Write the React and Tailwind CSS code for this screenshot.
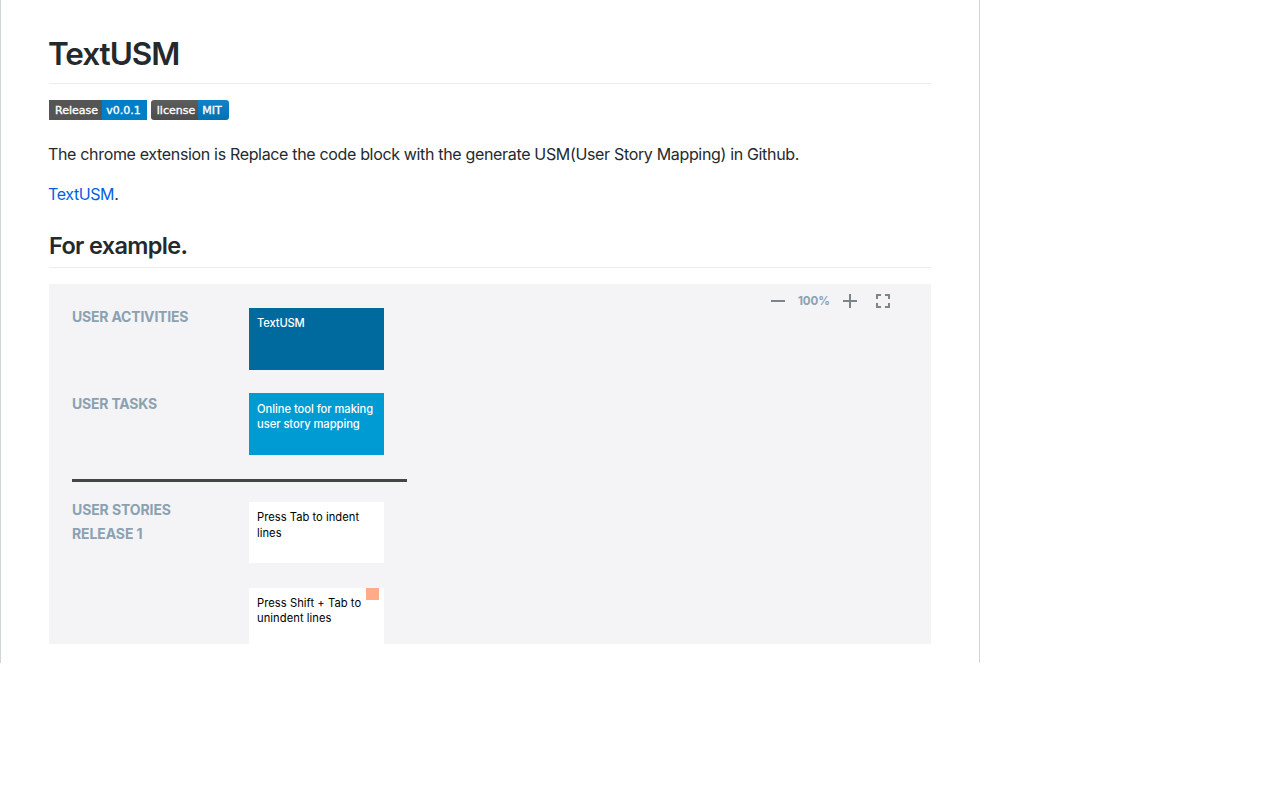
function Badge({ label, value, labelClass, valueClass, className }) {
  return (
    <div className={`flex h-5 overflow-hidden font-['DejaVu_Sans'] text-[11px] leading-[21px] text-white [-webkit-text-stroke:0.35px_white] ${className}`}>
      <span className={`whitespace-nowrap text-center ${labelClass}`}>{label}</span>
      <span className={`whitespace-nowrap text-center ${valueClass}`}>{value}</span>
    </div>
  );
}

function Card({ lines, className }) {
  return (
    <div className={`w-[135px] shrink-0 pl-2 text-[11.2px] leading-[15.5px] ${className}`}>
      {lines.map((line) => (
        <div key={line} className="whitespace-nowrap">{line}</div>
      ))}
    </div>
  );
}

function Label({ children, className }) {
  return <div className={`whitespace-nowrap text-[14px] font-bold text-[#8ba1b1] ${className}`}>{children}</div>;
}

function Toolbar() {
  return (
    <div className="absolute left-[722px] top-[9px] flex h-4 items-center">
      <svg className="h-4 w-[14px]" viewBox="0 0 14 16" fill="#7c8589">
        <path d="M0 7h14v2H0z" />
      </svg>
      <span className="ml-[13px] w-[32px] whitespace-nowrap text-[11.5px] font-bold leading-4 tracking-[-0.1px] text-[#8ba1b1]">100%</span>
      <svg className="ml-[13px] h-4 w-[14px]" viewBox="0 0 14 16" fill="#7c8589">
        <path d="M0 7h6V1h2v6h6v2H8v6H6V9H0z" />
      </svg>
      <svg className="ml-[19px] h-[14px] w-[14px]" viewBox="0 0 14 14" fill="#7c8589">
        <path d="M0 0h5v2H2v3H0zM9 0h5v5h-2V2H9zM0 9h2v3h3v2H0zM12 9h2v5H9v-2h3z" />
      </svg>
    </div>
  );
}

export default function App() {
  return (
    <div className="h-[800px] w-[1280px] overflow-hidden bg-white font-[Inter,sans-serif] text-[#24292e]">
      <main className="h-[663px] w-[980px] border-x border-[#d1d5da] px-12">
        <h1 className="h-[84px] -indent-px whitespace-nowrap border-b border-[#eaecef] pt-[34px] text-[31.5px] font-semibold leading-10 tracking-[-1.05px]">TextUSM</h1>
        <div className="mt-4 flex gap-1">
          <Badge label="Release" value="v0.0.1" labelClass="w-[53px] bg-[#555] pl-0.5" valueClass="w-[45px] bg-[#007ec6] pr-0.5" className="" />
          <Badge
            label="license"
            value="MIT"
            labelClass="w-[47px] bg-linear-to-b from-[#5d5d5d] to-[#4d4d4d] pl-[3px]"
            valueClass="w-[31px] bg-linear-to-b from-[#1283c8] to-[#0071b2] pr-[3px]"
            className="rounded-[3px]"
          />
        </div>
        <p className="mt-[22px] h-6 -indent-px whitespace-nowrap text-[16px] leading-6 tracking-[-0.335px]">
          The chrome extension is Replace the code block with the generate USM(User Story Mapping) in Github.
        </p>
        <p className="mt-4 h-6 -indent-px text-[16px] leading-6 tracking-[-0.4px]">
          <a className="text-[#035fe0]">TextUSM</a>.
        </p>
        <h2 className="mt-6 h-[38px] whitespace-nowrap border-b border-[#eaecef] pt-px text-[23.5px] font-semibold leading-[30px] tracking-[-0.65px]">For example.</h2>
        <section className="relative mt-4 h-[360px] overflow-hidden bg-[#f4f4f6] pl-[23px] pt-6">
          <Toolbar />
          <div className="flex h-[85px]">
            <Label className="w-[177px] leading-[18px] tracking-[-0.2px]">USER ACTIVITIES</Label>
            <Card className="h-[62px] bg-[#006a9e] pt-2 font-medium tracking-[-0.15px] text-white" lines={["TextUSM"]} />
          </div>
          <div className="flex h-[86px]">
            <Label className="w-[177px] leading-[22px] tracking-[-0.2px]">USER TASKS</Label>
            <Card className="h-[62px] bg-[#009bd3] pt-[8.5px] font-medium tracking-[-0.05px] text-white" lines={["Online tool for making", "user story mapping"]} />
          </div>
          <div className="h-[3px] w-[335px] bg-[#434743]" />
          <div className="mt-5 flex h-[86px]">
            <div className="w-[177px]">
              <Label className="-mt-1 leading-6 tracking-[-0.1px]">USER STORIES</Label>
              <Label className="leading-6 tracking-[-0.1px]">RELEASE 1</Label>
            </div>
            <Card className="h-[61px] bg-white pt-2 tracking-[0.02px] text-black" lines={["Press Tab to indent", "lines"]} />
          </div>
          <div className="flex pl-[177px]">
            <Card className="h-[62px] bg-white pt-[7.5px] tracking-[0.05px] text-black" lines={["Press Shift + Tab to", "unindent lines"]} />
            <span className="absolute left-[317px] top-[304px] h-3 w-[13px] bg-[#ffab8a]" />
          </div>
        </section>
      </main>
    </div>
  );
}
